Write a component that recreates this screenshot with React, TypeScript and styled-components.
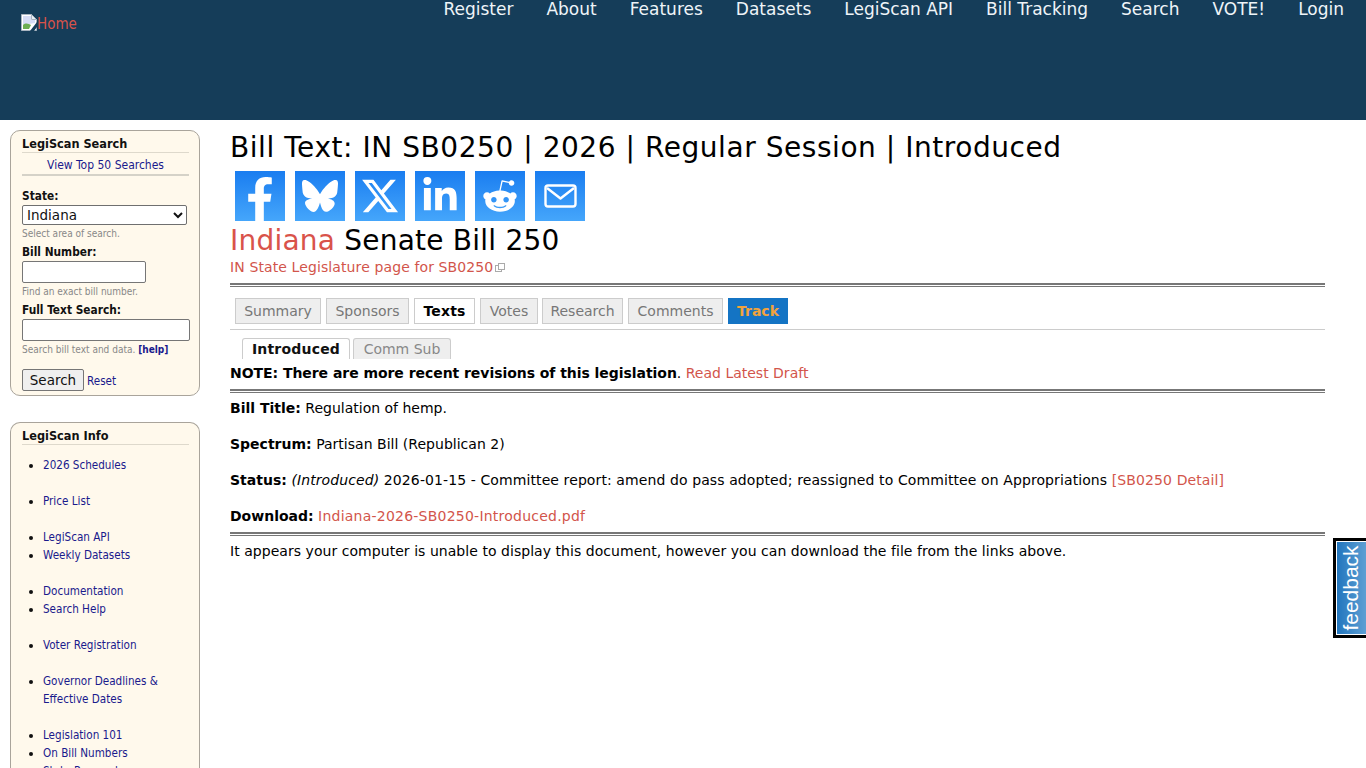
import React from "react";
import styled, { createGlobalStyle } from "styled-components";
import { FaFacebookF, FaLinkedinIn, FaRedditAlien } from "react-icons/fa";
import { FaBluesky, FaXTwitter } from "react-icons/fa6";

const Global = createGlobalStyle`
  html, body { margin: 0; padding: 0; height: 768px; overflow: hidden; background: #fff; }
  body { font-family: "DejaVu Sans", Verdana, sans-serif; color: #000; }
  * { box-sizing: border-box; }
`;

const Header = styled.header`
  height: 120px; background: #153d59; display: flex; justify-content: space-between; align-items: flex-start;
`;
const Logo = styled.a`
  margin: 14px 0 0 21px; display: flex; align-items: flex-start; font-family: "DejaVu Sans Condensed", Arial, sans-serif;
  font-size: 15px; line-height: 20px; color: #d9534a;
`;
const Nav = styled.nav`
  display: flex; gap: 33px; padding-right: 22px;
`;
const NavLink = styled.a`
  font-family: "DejaVu Sans", sans-serif; font-size: 17px; line-height: 18px; color: #eef4f8;
`;
const Body = styled.div`
  display: flex; align-items: flex-start; padding: 10px 41px 0 10px;
`;
const Side = styled.aside`
  width: 190px; flex: none; display: flex; flex-direction: column; gap: 26px;
  font-family: "DejaVu Sans Condensed", "Open Sans", sans-serif;
`;
const Card = styled.section`
  background: #fff9ec; border: 1px solid #a9a49b; border-radius: 10px; padding: 4px 10px 4px 11px;
`;
const OpenCard = styled(Card)`
  border-bottom: none; border-radius: 10px 10px 0 0; height: 400px; overflow: hidden; padding-bottom: 0;
`;
const CardTitle = styled.h3`
  margin: 0; font-size: 12.6px; font-weight: 700; line-height: 17px; height: 18px; color: #111;
  border-bottom: 1px solid #ded9cc;
`;
const TopLink = styled.a`
  display: block; text-align: center; font-size: 12px; line-height: 24px; height: 23px; color: #1a1a8c;
  border-bottom: 2px solid #d5d2c8;
`;
const Label = styled.label<{ $mt?: number }>`
  display: block; font-size: 11.8px; font-weight: 700; line-height: 14px; color: #111;
  margin: ${p => p.$mt ?? 0}px 0 2px;
`;
const Hint = styled.div`
  font-size: 10px; line-height: 13px; color: #888; margin: 2px 0 5px;
  b { color: #1a1a8c; }
`;
const Select = styled.div`
  width: 165px; height: 20px; border: 1px solid #6f6f6f; border-radius: 2px; background: #fff; display: flex;
  align-items: center; justify-content: space-between; padding: 0 3px 0 4px;
  font-family: "DejaVu Sans", sans-serif; font-size: 13.5px; color: #111;
`;
const TextField = styled.div<{ $w: number }>`
  width: ${p => p.$w}px; height: 22px; border: 1px solid #767676; border-radius: 2px; background: #fff;
`;
const Actions = styled.div`
  display: flex; align-items: center; gap: 3px; margin-top: 13px;
`;
const SearchBtn = styled.button`
  width: 62px; height: 22px; padding: 0; border: 1px solid #767676; border-radius: 2px; background: #efefef;
  font-family: "DejaVu Sans", sans-serif; font-size: 13.5px; color: #111;
`;
const SmallLink = styled.a`
  font-size: 11.6px; color: #1a1a8c; padding-top: 2px;
`;
const List = styled.ul`
  margin: 11px 0 0; padding: 0 0 0 21px; list-style: disc;
`;
const Item = styled.li<{ $gap?: boolean }>`
  font-size: 11.6px; line-height: 18px; color: #111; margin-bottom: ${p => (p.$gap ? 18 : 0)}px;
  a { color: #1a1a8c; }
`;
const Main = styled.main`
  flex: 1; margin-left: 30px; min-width: 0; padding-top: 1px;
`;
const Title = styled.h1`
  margin: 0; font-size: 28px; font-weight: 400; line-height: 34px; letter-spacing: 0.55px; white-space: nowrap;
`;
const Shares = styled.div`
  display: flex; gap: 10px; padding-left: 5px; margin-top: 6px;
`;
const Share = styled.a<{ $flush?: boolean }>`
  width: 50px; height: 50px; display: flex; align-items: ${p => (p.$flush ? "flex-end" : "center")};
  justify-content: center; color: #fff; overflow: hidden;
  background: linear-gradient(#1a7df0, #45a6fb);
`;
const SubTitle = styled.h2`
  margin: 2px 0 0; font-size: 28px; font-weight: 400; line-height: 36px; letter-spacing: 0.22px; white-space: nowrap;
  span { color: #d9534a; }
`;
const Red = styled.a<{ $ls?: number }>`
  color: #d2554b; letter-spacing: ${p => p.$ls ?? 0}px;
`;
const StateLink = styled.div`
  font-size: 14px; line-height: 18px; color: #d2554b; display: flex; align-items: center; letter-spacing: 0.11px;
  margin-top: -1px; margin-bottom: 7px;
`;
const Rule = styled.hr`
  margin: 0; height: 4px; border: 1px solid #777; border-top-width: 2px; border-left: none; border-right: none; background: #fff;
`;
const TopTabs = styled.div`
  display: flex; padding: 0 5px 5px; border-bottom: 1px solid #ccc; margin-top: 11px;
`;
const TopTab = styled.a<{ $active?: boolean; $track?: boolean; $w: number; $mr: number }>`
  width: ${p => p.$w}px; margin-right: ${p => p.$mr}px; height: 26px; display: flex; align-items: center; justify-content: center; font-size: 14px;
  font-weight: ${p => (p.$active || p.$track ? 700 : 400)};
  letter-spacing: ${p => (p.$active ? 0.2 : 0)}px;
  color: ${p => (p.$track ? "#f2a33c" : p.$active ? "#000" : "#777")};
  background: ${p => (p.$track ? "#1474c4" : p.$active ? "#fff" : "#eee")};
  border: 1px solid ${p => (p.$track ? "#1474c4" : "#ccc")};
`;
const SubTabs = styled.div`
  display: flex; gap: 3px; padding-left: 12px; margin-top: 8px;
`;
const SubTab = styled.a<{ $active?: boolean; $w: number }>`
  width: ${p => p.$w}px; height: 21px; display: flex; align-items: center; justify-content: center; font-size: 14px;
  font-weight: ${p => (p.$active ? 700 : 400)}; color: ${p => (p.$active ? "#111" : "#888")};
  letter-spacing: ${p => (p.$active ? 0.2 : 0)}px;
  background: ${p => (p.$active ? "#fff" : "#eee")};
  border: 1px solid #ccc; border-bottom: none; border-radius: 3px 3px 0 0;
`;
const Note = styled.p`
  margin: 5px 0 7px; font-size: 14px; line-height: 18px;
  b { letter-spacing: -0.05px; }
`;
const Field = styled.p<{ $ls?: number; $mb?: number }>`
  margin: 0 0 ${p => p.$mb ?? 18}px; font-size: 14px; line-height: 18px; white-space: nowrap; letter-spacing: ${p => p.$ls ?? 0}px;
  b { letter-spacing: 0; }
`;
const Fields = styled.div`
  margin-top: 6px;
`;
const Plain = styled.p`
  margin: 6px 0 0; font-size: 14px; line-height: 18px; letter-spacing: 0.045px;
`;
const Feedback = styled.a`
  position: fixed; right: 0; top: 538px; width: 33px; height: 100px; border: 3px solid #000; border-right: none;
  box-shadow: inset 1px 1px 0 #fff, inset 0 -1px 0 #fff; background: linear-gradient(90deg, #1f74bd, #5f9fd3);
  display: flex; align-items: center; justify-content: center; color: #fff;
  font-family: "Liberation Sans", Arial, sans-serif; font-size: 21px;
  span { display: block; transform: rotate(-90deg); white-space: nowrap; }
`;

const BrokenImg = () => (
  <svg width="16" height="17" viewBox="0 0 16 17" style={{ flex: "none" }}>
    <path d="M0.5 0.5H10.5L15.5 5.5V16.5H0.5Z" fill="#fff" stroke="#a8b4c0" />
    <path d="M2 2H10V6H14V9L2 11Z" fill="#d6dcf5" />
    <path d="M2 15V11C5 8 8 10 10 11L8 15Z" fill="#6cae52" />
    <path d="M10.5 .5V5.5H15.5Z" fill="#e8eef4" stroke="#a8b4c0" />
    <path d="M16 8L9 17H13L16 13Z" fill="#153d59" />
  </svg>
);

const ExternalIcon = () => (
  <svg width="11" height="11" viewBox="0 0 11 11" style={{ marginLeft: 2 }} fill="none" stroke="#aaa">
    <rect x="0.5" y="3.5" width="6" height="6" />
    <rect x="3.5" y="1.5" width="6" height="6" fill="#fff" />
  </svg>
);

const Chevron = () => (
  <svg width="10" height="7" viewBox="0 0 10 7"><path d="M1 1l4 4 4-4" fill="none" stroke="#111" strokeWidth="2" /></svg>
);

const MailIcon = () => (
  <svg width="33" height="24" viewBox="0 0 33 24" fill="none" stroke="#fff" strokeWidth="2.4">
    <rect x="1.5" y="1.5" width="30" height="21" rx="2.5" />
    <path d="M3 4l13.500 10.500L30 4" strokeLinejoin="round" />
  </svg>
);

const nav = ["Register", "About", "Features", "Datasets", "LegiScan API", "Bill Tracking", "Search", "VOTE!", "Login"];
const tabs: [string, number, number][] = [
  ["Summary", 86, 5], ["Sponsors", 83, 5], ["Texts", 61, 5], ["Votes", 58, 4], ["Research", 81, 5], ["Comments", 95, 5],
];
const info: [string, boolean][] = [
  ["2026 Schedules", true], ["Price List", true], ["LegiScan API", false], ["Weekly Datasets", true],
  ["Documentation", false], ["Search Help", true], ["Voter Registration", true],
  ["Governor Deadlines & Effective Dates", true], ["Legislation 101", false], ["On Bill Numbers", false], ["State Research", false],
];

export default function App() {
  return (
    <>
      <Global />
      <Header>
        <Logo><BrokenImg />Home</Logo>
        <Nav>{nav.map(n => <NavLink key={n}>{n}</NavLink>)}</Nav>
      </Header>
      <Body>
        <Side>
          <Card>
            <CardTitle>LegiScan Search</CardTitle>
            <TopLink>View Top 50 Searches</TopLink>
            <Label $mt={13}>State:</Label>
            <Select>Indiana<Chevron /></Select>
            <Hint>Select area of search.</Hint>
            <Label>Bill Number:</Label>
            <TextField $w={124} />
            <Hint>Find an exact bill number.</Hint>
            <Label>Full Text Search:</Label>
            <TextField $w={168} />
            <Hint>Search bill text and data. <b>[help]</b></Hint>
            <Actions><SearchBtn>Search</SearchBtn><SmallLink>Reset</SmallLink></Actions>
          </Card>
          <OpenCard>
            <CardTitle>LegiScan Info</CardTitle>
            <List>{info.map(([t, g]) => <Item key={t} $gap={g}><a>{t}</a></Item>)}</List>
          </OpenCard>
        </Side>
        <Main>
          <Title>Bill Text: IN SB0250 | 2026 | Regular Session | Introduced</Title>
          <Shares>
            <Share $flush><FaFacebookF size={44} /></Share>
            <Share><FaBluesky size={36} /></Share>
            <Share><FaXTwitter size={40} /></Share>
            <Share><FaLinkedinIn size={38} /></Share>
            <Share><FaRedditAlien size={36} /></Share>
            <Share><MailIcon /></Share>
          </Shares>
          <SubTitle><span>Indiana</span> Senate Bill 250</SubTitle>
          <StateLink>IN State Legislature page for SB0250<ExternalIcon /></StateLink>
          <Rule />
          <TopTabs>
            {tabs.map(([t, w, m]) => <TopTab key={t} $w={w} $mr={m} $active={t === "Texts"}>{t}</TopTab>)}
            <TopTab $track $w={60} $mr={0}>Track</TopTab>
          </TopTabs>
          <SubTabs><SubTab $active $w={108}>Introduced</SubTab><SubTab $w={98}>Comm Sub</SubTab></SubTabs>
          <Note><b>NOTE: There are more recent revisions of this legislation</b>. <Red>Read Latest Draft</Red></Note>
          <Rule />
          <Fields>
            <Field><b>Bill Title:</b> Regulation of hemp.</Field>
            <Field $ls={0.02}><b>Spectrum:</b> Partisan Bill (Republican 2)</Field>
            <Field $ls={0.1}><b>Status:</b> <i>(Introduced)</i> 2026-01-15 - Committee report: amend do pass adopted; reassigned to Committee on Appropriations <Red $ls={0.1}>[SB0250 Detail]</Red></Field>
            <Field $mb={7}><b>Download:</b> <Red $ls={0.23}>Indiana-2026-SB0250-Introduced.pdf</Red></Field>
          </Fields>
          <Rule />
          <Plain>It appears your computer is unable to display this document, however you can download the file from the links above.</Plain>
        </Main>
      </Body>
      <Feedback><span>feedback</span></Feedback>
    </>
  );
}
